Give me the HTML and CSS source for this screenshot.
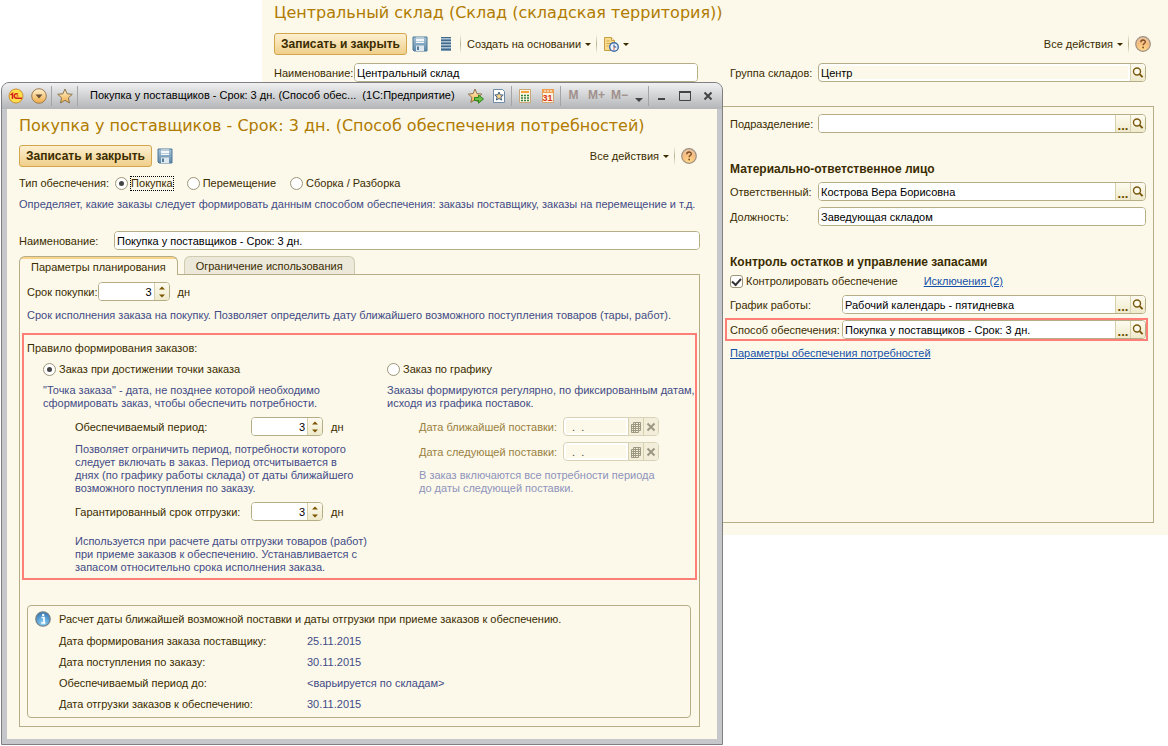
FILE: index.html
```html
<!DOCTYPE html>
<html lang="ru">
<head>
<meta charset="utf-8">
<title>Центральный склад (Склад (складская территория))</title>
<link rel="stylesheet" href="styles.css">
</head>
<body>
<svg class="defs" width="0" height="0" aria-hidden="true">
  <defs>
    <linearGradient id="gBlue" x1="0" y1="0" x2="0" y2="1"><stop offset="0" stop-color="#a9c4d8"/><stop offset="1" stop-color="#5d87a8"/></linearGradient>
    <linearGradient id="gGold" x1="0" y1="0" x2="0" y2="1"><stop offset="0" stop-color="#fff3d2"/><stop offset="1" stop-color="#f0ab45"/></linearGradient>
    <radialGradient id="gOrange" cx=".5" cy=".85" r=".8"><stop offset="0" stop-color="#ffd98a"/><stop offset=".6" stop-color="#f6bd80"/><stop offset="1" stop-color="#eac6a4"/></radialGradient>
    <radialGradient id="gInfo" cx=".5" cy=".8" r=".8"><stop offset="0" stop-color="#8fd6f8"/><stop offset="1" stop-color="#2f72b4"/></radialGradient>
    <symbol id="floppy" viewBox="0 0 16 16">
      <path d="M1 1h14v14H2l-1-1z" fill="url(#gBlue)" stroke="#4f7898"/>
      <path d="M4 1.500h8V7H4z" fill="#f4f8fa"/><path d="M4 2.500h8M4 5.500h8" stroke="#b9ccd9"/>
      <path d="M4 9.500h8V15H4z" fill="#dfe8ee"/><path d="M5 10.500h2V14H5z" fill="#567d9b"/>
    </symbol>
    <symbol id="list" viewBox="0 0 16 16">
      <path d="M3 1h10v14H3z" fill="#7799b3"/><path d="M3 1.500h10M3 4.500h10M3 7.500h10M3 10.500h10M3 13.500h10" stroke="#43698a"/><path d="M3 2.500h10M3 5.500h10M3 8.500h10M3 11.500h10" stroke="#a9c0d0"/>
    </symbol>
    <symbol id="report" viewBox="0 0 16 16">
      <path d="M1.500 1.500h7l3 3v10h-10z" fill="#f8dc8d" stroke="#c79e43"/><path d="M8.500 1.500v3h3" fill="#fff4cf" stroke="#c79e43"/>
      <path d="M3.500 5h3M3.500 7.500h5M3.500 10h2" stroke="#d5a94d"/>
      <circle cx="11" cy="11" r="4.300" fill="#eef6ff" stroke="#3e6ca8" stroke-width="1.400"/><path d="M11 8.500V11h2.300" fill="none" stroke="#284f86"/><path d="M11 11v3" stroke="#d75b3d"/>
    </symbol>
    <symbol id="help" viewBox="0 0 16 16">
      <circle cx="8" cy="8" r="7.300" fill="url(#gOrange)" stroke="#9d907f" stroke-width="1.200"/>
      <path d="M5.800 6.200c0-3 4.500-2.800 4.500-.3 0 1.600-2.200 1.600-2.200 3.400" fill="none" stroke="#7c4a25" stroke-width="1.300"/><circle cx="8.100" cy="11.500" r=".9" fill="#7c4a25"/>
    </symbol>
    <symbol id="info" viewBox="0 0 16 16">
      <circle cx="8" cy="8" r="7.200" fill="url(#gInfo)" stroke="#75828c" stroke-width="1.300"/>
      <path d="M6.500 6.500H9V12M6.300 12h4" fill="none" stroke="#fff" stroke-width="1.700"/><circle cx="8.200" cy="3.900" r="1.200" fill="#fff"/>
    </symbol>
    <symbol id="lens" viewBox="0 0 12 12">
      <circle cx="5" cy="4.500" r="3.500" fill="#fdfbee" stroke="#7b5a10" stroke-width="1.400"/><path d="M7.600 7.100l3 3" stroke="#7b5a10" stroke-width="2"/>
    </symbol>
    <symbol id="updown" viewBox="0 0 8 14">
      <path d="M1 4.500L4 1.500l3 3zM1 9.500l3 3 3-3z" fill="#7b5400"/>
    </symbol>
    <symbol id="grid" viewBox="0 0 12 12">
      <path d="M3.500 1.500h7v8h-2v2h-7v-8h2zM3.500 3.500v6h5M1.500 5.500h9M1.500 7.500h9M1.500 9.500h7M3.500 3.500h7M3.500 9.500v2M5.500 1.500v10M8.500 1.500v8" fill="none" stroke="#9c9781"/>
    </symbol>
    <symbol id="cross" viewBox="0 0 10 10"><path d="M1.500 1.500l7 7M8.500 1.500l-7 7" stroke="currentColor" stroke-width="2"/></symbol>
    <symbol id="star" viewBox="0 0 16 16"><path d="M8 1l2.100 4.800 5.200.5-3.900 3.500 1.100 5.200L8 12.300 3.500 15l1.100-5.200L.7 6.300l5.200-.5z" fill="url(#gGold)" stroke="#8b744d"/></symbol>
    <symbol id="staradd" viewBox="0 0 16 16"><path d="M7 1l1.900 4.600 5 .5-3.800 3.300 1.100 5L7 11.800 2.800 14.400l1.100-5L.3 6.100l4.900-.5z" fill="url(#gGold)" stroke="#8b744d"/><path d="M6.500 9.500h4V7l5 4-5 4.200v-2.700h-4z" fill="#6cc04a" stroke="#2b8519"/></symbol>
    <symbol id="docstar" viewBox="0 0 16 16"><path d="M2.500 1.500h9l2 2v11h-11z" fill="#fff" stroke="#6f8ba5"/><path d="M8 4l1.200 2.800 3 .3-2.300 2 .7 3L8 10.500 5.400 12l.7-3-2.300-2 3-.3z" fill="#f6d28a" stroke="#3f5e80"/></symbol>
    <symbol id="calc" viewBox="0 0 16 16"><path d="M2.500 1.500h11v13h-11z" fill="#fff6e3" stroke="#caa676"/><path d="M4 3h8v2H4z" fill="#f7a23c"/><path d="M4 7.500h8M4 10h8M4 12.500h8" stroke="#2f7f3b" stroke-width="1.500" stroke-dasharray="2 1"/></symbol>
    <symbol id="cal" viewBox="0 0 16 16"><path d="M2.500 1.500h11v13h-11z" fill="#fff4dd" stroke="#d6a771"/><path d="M2 1h12v4H2z" fill="#ee9f4f"/><path d="M5 2v2M8 2v2M11 2v2" stroke="#fff"/></symbol>
    <symbol id="one" viewBox="0 0 16 16"><circle cx="8" cy="8" r="7" fill="#ffe04a" stroke="#c98d38"/><path d="M2.500 7l2-1.500V11M10 6.200C8 4.800 6.300 6.400 6.300 8s1.600 2.500 3.700 2.200h4" fill="none" stroke="#d3201c" stroke-width="1.500"/><path d="M10.500 8H8.500" stroke="#d3201c"/></symbol>
    <symbol id="drop" viewBox="0 0 16 16"><circle cx="8" cy="8" r="7.300" fill="url(#gGold)" stroke="#9c7a52"/><path d="M4.500 6.500h7L8 10.500z" fill="#6b5138"/></symbol>
  </defs>
</svg>

<main class="form">
  <h1 class="title">Центральный склад (Склад (складская территория))</h1>
  <div class="toolbar">
    <button class="primary" type="button">Записать и закрыть</button>
    <button class="tool" type="button" aria-label="Записать"><svg class="i16"><use href="#floppy"/></svg></button>
    <button class="tool" type="button" aria-label="Список"><svg class="i16"><use href="#list"/></svg></button>
    <span class="sep"></span>
    <button class="menu" type="button">Создать на основании<span class="caret"></span></button>
    <span class="sep"></span>
    <button class="menu" type="button" aria-label="Отчеты"><svg class="i16"><use href="#report"/></svg><span class="caret"></span></button>
    <span class="grow"></span>
    <button class="menu" type="button">Все действия<span class="caret"></span></button>
    <span class="sep"></span>
    <button class="help" type="button" aria-label="Справка"><svg class="i16"><use href="#help"/></svg></button>
  </div>
  <div class="headrow">
    <div class="row name">
      <label for="wname">Наименование:</label>
      <div class="field"><input id="wname" type="text" value="Центральный склад"></div>
    </div>
    <div class="row side">
      <label for="wgroup">Группа складов:</label>
      <div class="field muted"><input id="wgroup" type="text" value="Центр" readonly><button type="button" aria-label="Открыть"><svg class="i12"><use href="#lens"/></svg></button></div>
    </div>
  </div>
  <section class="box">
    <div class="props">
      <div class="row side">
        <label for="dept">Подразделение:</label>
        <div class="field"><input id="dept" type="text"><button type="button" aria-label="Выбрать" class="dots">...</button><button type="button" aria-label="Открыть"><svg class="i12"><use href="#lens"/></svg></button></div>
      </div>
      <h2>Материально-ответственное лицо</h2>
      <div class="row side">
        <label for="resp">Ответственный:</label>
        <div class="field"><input id="resp" type="text" value="Кострова Вера Борисовна"><button type="button" aria-label="Выбрать" class="dots">...</button><button type="button" aria-label="Открыть"><svg class="i12"><use href="#lens"/></svg></button></div>
      </div>
      <div class="row side">
        <label for="post">Должность:</label>
        <div class="field"><input id="post" type="text" value="Заведующая складом"></div>
      </div>
      <h2>Контроль остатков и управление запасами</h2>
      <div class="checks">
        <label class="opt"><input type="checkbox" checked>Контролировать обеспечение</label>
        <a href="#">Исключения (2)</a>
      </div>
      <div class="row wide">
        <label for="cal1">График работы:</label>
        <div class="field"><input id="cal1" type="text" value="Рабочий календарь - пятидневка"><button type="button" aria-label="Выбрать" class="dots">...</button><button type="button" aria-label="Открыть"><svg class="i12"><use href="#lens"/></svg></button></div>
      </div>
      <div class="row wide marked">
        <label for="way">Способ обеспечения:</label>
        <div class="field"><input id="way" type="text" value="Покупка у поставщиков - Срок: 3 дн."><button type="button" aria-label="Выбрать" class="dots">...</button><button type="button" aria-label="Открыть"><svg class="i12"><use href="#lens"/></svg></button></div>
      </div>
      <a class="plink" href="#">Параметры обеспечения потребностей</a>
    </div>
  </section>
</main>

<div class="dialog" role="dialog" aria-labelledby="dtitle">
  <header class="bar">
    <button type="button" aria-label="1С"><svg class="i16"><use href="#one"/></svg></button>
    <button type="button" aria-label="Главное меню"><svg class="i16"><use href="#drop"/></svg></button>
    <span class="bsep"></span>
    <button type="button" aria-label="Избранное"><svg class="i16"><use href="#star"/></svg></button>
    <span class="bsep"></span>
    <span class="caption">Покупка у поставщиков - Срок: 3 дн. (Способ обес...&nbsp; (1С:Предприятие)</span>
    <button type="button" aria-label="Добавить в избранное"><svg class="i16"><use href="#staradd"/></svg></button>
    <button type="button" aria-label="Ссылка"><svg class="i16"><use href="#docstar"/></svg></button>
    <span class="bsep"></span>
    <button type="button" aria-label="Калькулятор"><svg class="i16"><use href="#calc"/></svg></button>
    <button type="button" class="cal"><svg class="i16"><use href="#cal"/></svg><span>31</span></button>
    <span class="bsep"></span>
    <button type="button" class="mem">M</button>
    <button type="button" class="mem">M+</button>
    <button type="button" class="mem">M−</button>
    <button type="button" class="more" aria-label="Еще"><span class="caret"></span></button>
    <span class="bsep"></span>
    <button type="button" aria-label="Свернуть"><svg class="i12" viewBox="0 0 12 12"><path d="M2 9h7" stroke="#444" stroke-width="2"/></svg></button>
    <button type="button" aria-label="Развернуть"><svg class="i12" viewBox="0 0 12 12"><path d="M0 2h12" stroke="#444" stroke-width="2"/><path d="M.5 2v8.500h11V2" stroke="#444" fill="none"/></svg></button>
    <button type="button" class="close" aria-label="Закрыть"><svg class="i10"><use href="#cross"/></svg></button>
  </header>
  <div class="content">
    <h1 class="title" id="dtitle">Покупка у поставщиков - Срок: 3 дн. (Способ обеспечения потребностей)</h1>
    <div class="toolbar">
      <button class="primary" type="button">Записать и закрыть</button>
      <button class="tool" type="button" aria-label="Записать"><svg class="i16"><use href="#floppy"/></svg></button>
      <span class="grow"></span>
      <button class="menu" type="button">Все действия<span class="caret"></span></button>
      <span class="sep"></span>
      <button class="help" type="button" aria-label="Справка"><svg class="i16"><use href="#help"/></svg></button>
    </div>
    <div class="kinds">
      <span class="kindlabel">Тип обеспечения:</span>
      <label class="opt"><input type="radio" name="kind" checked><span class="focus">Покупка</span></label>
      <label class="opt"><input type="radio" name="kind">Перемещение</label>
      <label class="opt"><input type="radio" name="kind">Сборка / Разборка</label>
    </div>
    <p class="hint">Определяет, какие заказы следует формировать данным способом обеспечения: заказы поставщику, заказы на перемещение и т.д.</p>
    <div class="row dname">
      <label for="dn">Наименование:</label>
      <div class="field"><input id="dn" type="text" value="Покупка у поставщиков - Срок: 3 дн."></div>
    </div>
    <div class="tabs" role="tablist">
      <button class="tab active" type="button" role="tab" aria-selected="true">Параметры планирования</button>
      <button class="tab" type="button" role="tab" aria-selected="false">Ограничение использования</button>
    </div>
    <div class="panel" role="tabpanel">
      <div class="term">
        <label for="term">Срок покупки:</label>
        <div class="field spin"><input id="term" type="text" value="3"><button type="button" aria-label="Изменить"><svg class="ud"><use href="#updown"/></svg></button></div>
        <span class="unit">дн</span>
      </div>
      <p class="hint termhint">Срок исполнения заказа на покупку. Позволяет определить дату ближайшего возможного поступления товаров (тары, работ).</p>
      <section class="rule">
        <p class="rulehead">Правило формирования заказов:</p>
        <div class="cols">
          <div class="colA">
            <label class="opt"><input type="radio" name="rule" checked>Заказ при достижении точки заказа</label>
            <p class="hint lead">"Точка заказа" - дата, не позднее которой необходимо<br>сформировать заказ, чтобы обеспечить потребности.</p>
            <div class="sub">
              <div class="num">
                <label for="per">Обеспечиваемый период:</label>
                <div class="field spin"><input id="per" type="text" value="3"><button type="button" aria-label="Изменить"><svg class="ud"><use href="#updown"/></svg></button></div>
                <span class="unit">дн</span>
              </div>
              <p class="hint mid">Позволяет ограничить период, потребности которого<br>следует включать в заказ. Период отсчитывается в<br>днях (по графику работы склада) от даты ближайшего<br>возможного поступления по заказу.</p>
              <div class="num">
                <label for="gar">Гарантированный срок отгрузки:</label>
                <div class="field spin"><input id="gar" type="text" value="3"><button type="button" aria-label="Изменить"><svg class="ud"><use href="#updown"/></svg></button></div>
                <span class="unit">дн</span>
              </div>
              <p class="hint last">Используется при расчете даты отгрузки товаров (работ)<br>при приеме заказов к обеспечению. Устанавливается с<br>запасом относительно срока исполнения заказа.</p>
            </div>
          </div>
          <div class="colB">
            <label class="opt"><input type="radio" name="rule">Заказ по графику</label>
            <p class="hint lead">Заказы формируются регулярно, по фиксированным датам,<br>исходя из графика поставок.</p>
            <div class="sub off">
              <div class="date">
                <label for="d1">Дата ближайшей поставки:</label>
                <div class="field muted"><input id="d1" type="text" value="  .  ." disabled><button type="button" disabled aria-label="Календарь"><svg class="i12"><use href="#grid"/></svg></button><button type="button" disabled aria-label="Очистить"><svg class="i10"><use href="#cross"/></svg></button></div>
              </div>
              <div class="date">
                <label for="d2">Дата следующей поставки:</label>
                <div class="field muted"><input id="d2" type="text" value="  .  ." disabled><button type="button" disabled aria-label="Календарь"><svg class="i12"><use href="#grid"/></svg></button><button type="button" disabled aria-label="Очистить"><svg class="i10"><use href="#cross"/></svg></button></div>
              </div>
              <p class="hint">В заказ включаются все потребности периода<br>до даты следующей поставки.</p>
            </div>
          </div>
        </div>
      </section>
      <section class="summary">
        <svg class="i16"><use href="#info"/></svg>
        <div>
          <p class="sumhead">Расчет даты ближайшей возможной поставки и даты отгрузки при приеме заказов к обеспечению.</p>
          <dl class="facts">
            <dt>Дата формирования заказа поставщику:</dt><dd>25.11.2015</dd>
            <dt>Дата поступления по заказу:</dt><dd>30.11.2015</dd>
            <dt>Обеспечиваемый период до:</dt><dd>&lt;варьируется по складам&gt;</dd>
            <dt>Дата отгрузки заказов к обеспечению:</dt><dd>30.11.2015</dd>
          </dl>
        </div>
      </section>
    </div>
  </div>
</div>
</body>
</html>
```

FILE: styles.css
```css
* { box-sizing: border-box; }
body {
  margin: 0;
  position: relative;
  min-height: 100vh;
  background: #fff;
  color: #3b2c00;
  font: 11px/13px "Liberation Sans", Arial, sans-serif;
}
h1, h2, p, dl, dd { margin: 0; }
button, input { font: inherit; color: inherit; }
button { padding: 0; border: 0; background: none; display: flex; align-items: center; justify-content: center; }
a { color: #1450a8; }
svg { display: block; flex: none; }
label, .menu, .tab, .primary, .hint { white-space: nowrap; }
.defs { position: absolute; }
.i16 { width: 16px; height: 16px; }
.i12 { width: 12px; height: 12px; }
.i10 { width: 10px; height: 10px; }
.ud { width: 8px; height: 14px; }
.grow { flex: 1; }

.form { margin-left: 262px; padding: 0 14px 12px 12px; background: #fcf9ea; }
.title {
  color: #b07b00;
  font: 16px/26px "DejaVu Sans", Verdana, sans-serif;
  white-space: nowrap;
}
.toolbar { display: flex; align-items: center; height: 22px; padding-right: 3px; }
.primary {
  height: 22px;
  padding: 0 6px;
  border: 1px solid #d3a64e;
  border-radius: 3px;
  background: linear-gradient(#fdf0d0, #f0cf8b);
  font-weight: bold;
  font-size: 12px;
}
.tool { width: 26px; height: 22px; }
.menu { height: 22px; gap: 4px; padding-right: 4px; }
.caret { border: 3px solid transparent; border-top-color: #3b2c00; border-bottom: 0; }
.sep { width: 1px; height: 20px; margin: 0 6px 0 1px; background: linear-gradient(#fcf9ea, #b9b391, #fcf9ea); }
.form .toolbar { margin-top: 7px; }

.field {
  display: flex;
  height: 19px;
  min-width: 0;
  border: 1px solid #b5ad86;
  border-radius: 4px;
  background: #fff;
  overflow: hidden;
}
.field input {
  flex: 1;
  min-width: 0;
  width: 100%;
  padding: 2px 2px 0;
  border: 0;
  background: #fff;
  color: #000;
  outline: 0;
}
.field button { width: 15px; border-left: 1px solid #d6d0ad; background: linear-gradient(#fdfbf0, #efeacb); }
.field .dots { padding-top: 4px; color: #6b4c00; font-weight: bold; font-size: 13px; }
.field.muted input { margin: 2px; padding: 1px 0 0; background: #fcf9ea; }

.row { display: grid; align-items: center; }
.row label, .num label, .date label, .term label, .unit { padding-top: 2px; }
.name { grid-template-columns: 80px 1fr; }
.side { grid-template-columns: 88px 1fr; }
.wide { grid-template-columns: 112px 1fr; }
.headrow { display: grid; grid-template-columns: 1fr 416px; gap: 32px; margin: 8px 8px 0 0; }
.box {
  display: flex;
  justify-content: flex-end;
  min-height: 417px;
  margin-top: 24px;
  padding: 7px;
  border: 1px solid #b5ad86;
}
.props { width: 416px; }
h2 { font: bold 12px/14px "Liberation Sans", Arial, sans-serif; }
.props h2 { margin: 29px 0 6px; }
.props .row + .row { margin-top: 6px; }
.checks { display: flex; gap: 26px; margin-bottom: 7px; }
.opt { display: flex; align-items: center; gap: 3px; }
.opt input {
  appearance: none;
  display: grid;
  place-items: center;
  width: 13px;
  height: 13px;
  margin: 0;
  border: 1px solid #9c9578;
  background: #fff;
}
.opt input[type="radio"] { border-radius: 50%; }
.opt input[type="radio"]:checked::before { content: ""; width: 5px; height: 5px; border-radius: 50%; background: #444; }
.opt input[type="checkbox"] { border-radius: 3px; }
.opt input[type="checkbox"]:checked::before { content: ""; width: 7px; height: 4px; margin-bottom: 2px; border: solid #333; border-width: 0 0 2px 2px; transform: rotate(-48deg); }
.marked { position: relative; }
.marked::after { content: ""; position: absolute; inset: -2px -2px -2px -5px; border: 2px solid #fd7f78; pointer-events: none; }
.plink { display: inline-block; margin-top: 8px; }

.dialog {
  position: absolute;
  top: 82px;
  left: 1px;
  width: calc(100% - 446px);
  border: 1px solid #808084;
  border-radius: 8px 8px 0 0;
  background: #c6c7ca;
  padding: 0 5px 5px;
}
.bar {
  display: flex;
  align-items: center;
  height: 26px;
  margin: 0 -5px;
  padding: 0 3px 1px 2px;
  border-radius: 7px 7px 0 0;
  background: linear-gradient(#f0f0f1, #d4d5d7 45%, #b4b5b8);
}
.bar button { width: 23px; height: 24px; }
.bar .mem { color: #a0918d; font-weight: bold; font-size: 12px; }
.bar .more { width: 16px; padding-top: 8px; }
.bar .more .caret { border-width: 4px; border-bottom: 0; border-top-color: #444; }
.bar .close { color: #444; }
.bsep { width: 1px; height: 20px; margin: 0 1px; background: #a5a5a7; }
.caption { flex: 1; min-width: 0; padding-left: 11px; overflow: hidden; color: #000; white-space: nowrap; }
.cal { position: relative; }
.cal span { position: absolute; inset: 9px 0 0; color: #d8371c; font-size: 9px; line-height: 10px; font-weight: bold; }
.content { padding: 4px 17px 12px 12px; background: #fcf9ea; }
.content .toolbar { margin-top: 6px; }
.kinds { display: flex; align-items: center; gap: 14px; margin-top: 10px; }
.kindlabel { margin-right: -8px; }
.focus { outline: 1px dotted #000; }
.content > .hint { margin-top: 8px; }
.hint { color: #424b86; }
.dname { grid-template-columns: 95px 1fr; margin-top: 20px; }
.tabs { display: flex; gap: 6px; margin-top: 6px; }
.tab {
  height: 18px;
  padding: 2px 11px 0;
  border: 1px solid #cfcab0;
  border-bottom: 0;
  border-radius: 6px 6px 0 0;
  background: #ece9da;
}
.tab.active { height: 19px; margin-bottom: -1px; border-color: #b5ad86; background: linear-gradient(#f9d48b 2px, #fcf9ea 2px); z-index: 1; }
.panel { border: 1px solid #b5ad86; padding: 7px 2px 8px; }
.term { display: flex; align-items: center; padding-left: 5px; }
.spin { width: 72px; }
.spin input { text-align: right; }
.unit { margin-left: 8px; }
.termhint { padding-left: 5px; margin-top: 8px; }
.rule { margin-top: 11px; padding: 7px 0 4px 3px; border: 2px solid #fd7f78; }
.rulehead { margin-bottom: 8px; }
.cols { display: grid; grid-template-columns: 344px 1fr; padding-left: 16px; }
.lead { margin: 8px 0 7px; }
.sub { padding-left: 32px; }
.num { display: grid; grid-template-columns: 176px 72px auto; align-items: center; }
.mid { margin: 7px 0; }
.last { margin-top: 14px; }
.date { display: grid; grid-template-columns: 144px 96px; align-items: center; margin-bottom: 6px; }
.off { color: #9a7f40; }
.off .field { border-color: #d8d3b8; }
.off .field input { color: #4a4330; white-space: pre; }
.off .field button { background: #f2eed9; color: #9c9781; }
.off .hint { margin-top: 8px; color: #8e93bb; }
.summary {
  display: flex;
  gap: 8px;
  margin: 25px 6px 0 5px;
  padding: 5px 7px 2px;
  border: 1px solid #b5ad86;
  border-radius: 4px;
}
.sumhead { margin: 2px 0 5px; }
.facts { display: grid; grid-template-columns: 248px 1fr; line-height: 21px; }
.facts dd { color: #424b86; }
```
